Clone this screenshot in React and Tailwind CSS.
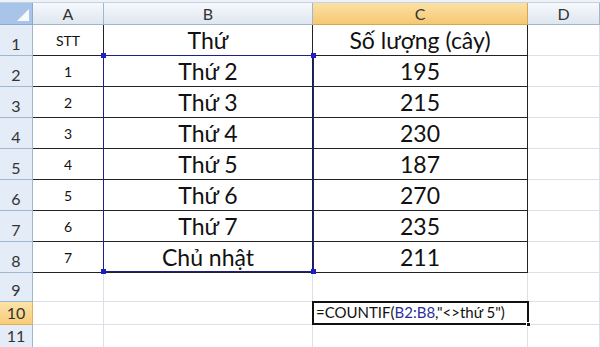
import React from 'react';

const cols = [
  { key: 'A', w: 'w-[71px]' },
  { key: 'B', w: 'w-[209px]' },
  { key: 'C', w: 'w-[215px]' },
  { key: 'D', w: 'w-[72px]' },
];

const data = [
  ['STT', 'Thứ', 'Số lượng (cây)'],
  ['1', 'Thứ 2', '195'],
  ['2', 'Thứ 3', '215'],
  ['3', 'Thứ 4', '230'],
  ['4', 'Thứ 5', '187'],
  ['5', 'Thứ 6', '270'],
  ['6', 'Thứ 7', '235'],
  ['7', 'Chủ nhật', '211'],
];

const font = { fontFamily: 'Lato, "Noto Sans", sans-serif' };

function RowHead({ n, h, active }) {
  return (
    <div
      className={`w-[33px] shrink-0 ${h} flex items-end justify-center pb-[1px] text-[16px] leading-[20px] text-[#333] border-r border-b ${
        active
          ? 'bg-gradient-to-b from-[#fbe3a8] to-[#f7cc78] border-[#e0b060]'
          : 'bg-[#e4ecf7] border-[#9eb6ce]'
      }`}
    >
      {n}
    </div>
  );
}

function Cell({ w, h, className = '', children }) {
  return (
    <div className={`${w} ${h} shrink-0 border-r border-b flex items-end ${className}`}>
      {children}
    </div>
  );
}

export default function App() {
  return (
    <div className="relative w-[600px] h-[347px] overflow-hidden bg-white" style={font}>
      <div className="h-[3px] bg-[#eef2f8] border-b border-[#c5d2e2]" />
      {/* column headers */}
      <div className="flex h-[22px]">
        <div className="w-[33px] shrink-0 bg-[#a9c4e9] border-r border-b border-[#8ea9cf] relative">
          <svg className="absolute right-[3px] bottom-[3px]" width="12" height="12" viewBox="0 0 12 12">
            <polygon points="12,0 12,12 0,12" fill="#ffffff" opacity="0.9" />
          </svg>
        </div>
        {cols.map((c) => (
          <div
            key={c.key}
            className={`${c.w} shrink-0 flex items-center justify-center text-[16px] text-[#333] border-r border-b ${
              c.key === 'C'
                ? 'bg-gradient-to-b from-[#fbe1a4] to-[#f6c872] border-[#d9a552]'
                : 'bg-gradient-to-b from-[#f6f9fc] to-[#dfe6ef] border-[#9eb6ce]'
            }`}
          >
            {c.key}
          </div>
        ))}
      </div>

      {/* table rows */}
      {data.map((r, i) => (
        <div key={i} className="flex">
          <RowHead n={i + 1} h="h-[31px]" />
          <Cell w="w-[71px]" h="h-[31px]" className="border-[#222] justify-center pb-[5px] text-[14px] leading-[18px] text-[#111]">
            {r[0]}
          </Cell>
          <Cell w="w-[209px]" h="h-[31px]" className="border-[#222] justify-center pb-[2px] text-[23px] leading-[26px] text-[#111]">
            {r[1]}
          </Cell>
          <Cell w="w-[215px]" h="h-[31px]" className="border-[#222] justify-center pb-[2px] text-[23px] leading-[26px] text-[#111]">
            {r[2]}
          </Cell>
          <Cell w="w-[72px]" h="h-[31px]" className="border-[#dadfe8]" />
        </div>
      ))}

      {[
        { n: 9, h: 'h-[29px]' },
        { n: 10, h: 'h-[23px]', active: true },
        { n: 11, h: 'h-[23px]' },
      ].map((r) => (
        <div key={r.n} className="flex">
          <RowHead n={r.n} h={r.h} active={r.active} />
          <Cell w="w-[71px]" h={r.h} className="border-[#dadfe8]" />
          <Cell w="w-[209px]" h={r.h} className="border-[#dadfe8]" />
          <Cell w="w-[215px]" h={r.h} className="border-[#dadfe8] pl-[3px] pb-[1px] text-[15px] text-[#111] whitespace-nowrap">
            {r.n === 10 && (
              <span>
                =COUNTIF(<span className="text-[#2b2f9a]">B2:B8</span>,"&lt;&gt;thứ 5")
              </span>
            )}
          </Cell>
          <Cell w="w-[72px]" h={r.h} className="border-[#dadfe8]" />
        </div>
      ))}

      {/* formula range highlight B2:B8 */}
      <div className="absolute left-[103px] top-[55px] w-[211px] h-[217px] border border-[#1e1e8c] pointer-events-none">
        <div className="absolute -left-[3px] -top-[3px] w-[5px] h-[5px] bg-[#1e1ec8]" />
        <div className="absolute -right-[3px] -top-[3px] w-[5px] h-[5px] bg-[#1e1ec8]" />
        <div className="absolute -left-[3px] -bottom-[3px] w-[5px] h-[5px] bg-[#1e1ec8]" />
        <div className="absolute -right-[3px] -bottom-[3px] w-[5px] h-[5px] bg-[#1e1ec8]" />
      </div>

      {/* active cell C10 */}
      <div className="absolute left-[312px] top-[301px] w-[217px] h-[24px] border-2 border-[#111] pointer-events-none">
        <div className="absolute -right-[4px] -bottom-[4px] w-[5px] h-[5px] bg-[#111] border border-white" />
      </div>
    </div>
  );
}
